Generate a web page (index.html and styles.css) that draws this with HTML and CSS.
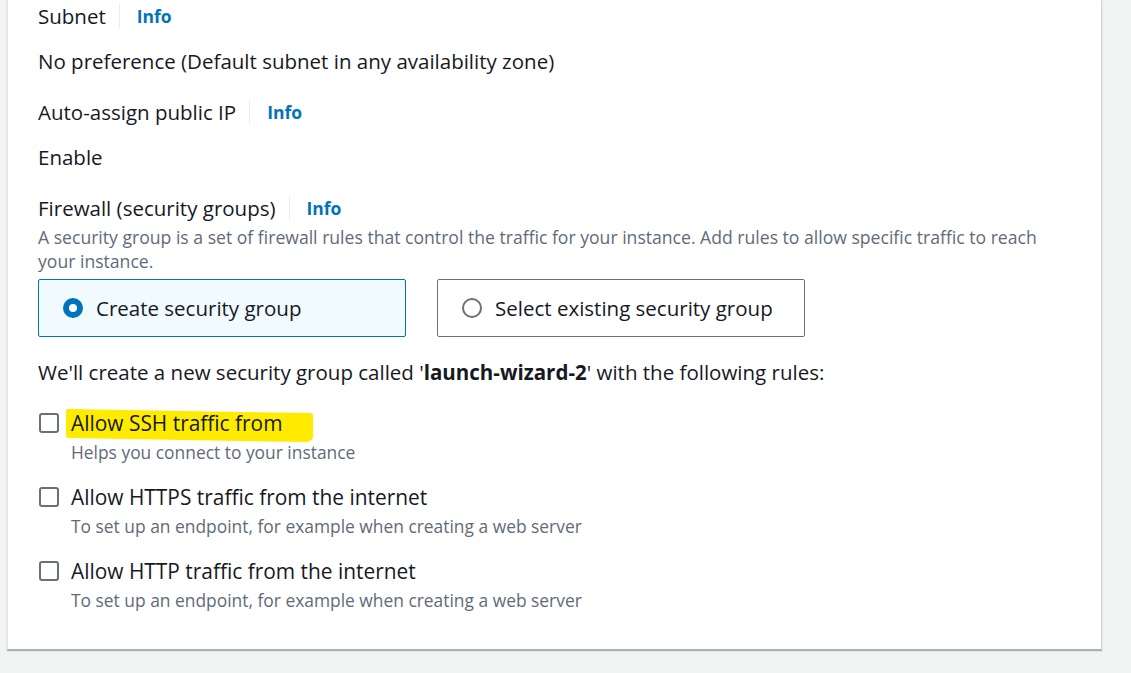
FILE: index.html
```html
<!DOCTYPE html>
<html>
<head>
<meta charset="utf-8">
<link rel="stylesheet" href="styles.css">
</head>
<body>
<div class="page">
  <div class="panel">
    <div class="field">
      <div class="label-row"><span class="label">Subnet</span><span class="divider"></span><a class="info">Info</a></div>
      <div class="value">No preference (Default subnet in any availability zone)</div>
    </div>
    <div class="field">
      <div class="label-row"><span class="label">Auto-assign public IP</span><span class="divider"></span><a class="info">Info</a></div>
      <div class="value">Enable</div>
    </div>
    <div class="field fw">
      <div class="label-row"><span class="label">Firewall (security groups)</span><span class="divider"></span><a class="info">Info</a></div>
      <div class="desc">A security group is a set of firewall rules that control the traffic for your instance. Add rules to allow specific traffic to reach your instance.</div>
      <div class="tiles">
        <div class="tile selected"><span class="radio on"></span><span>Create security group</span></div>
        <div class="tile"><span class="radio"></span><span>Select existing security group</span></div>
      </div>
    </div>
    <div class="note">We'll create a new security group called '<b>launch-wizard-2</b>' with the following rules:</div>
    <div class="checks">
      <div class="check">
        <span class="box"></span>
        <div class="check-text">
          <div class="check-label"><span class="hl"></span><span class="lt">Allow SSH traffic from</span></div>
          <div class="check-desc">Helps you connect to your instance</div>
        </div>
      </div>
      <div class="check">
        <span class="box"></span>
        <div class="check-text">
          <div class="check-label">Allow HTTPS traffic from the internet</div>
          <div class="check-desc">To set up an endpoint, for example when creating a web server</div>
        </div>
      </div>
      <div class="check">
        <span class="box"></span>
        <div class="check-text">
          <div class="check-label">Allow HTTP traffic from the internet</div>
          <div class="check-desc">To set up an endpoint, for example when creating a web server</div>
        </div>
      </div>
    </div>
  </div>
</div>
</body>
</html>
```

FILE: styles.css
```css
html, body {
  margin: 0;
  padding: 0;
  background: #f2f3f3;
  font-family: "Open Sans", "Noto Sans", sans-serif;
  color: #16191f;
}
.page {
  width: 1131px;
  height: 673px;
  overflow: hidden;
}
.panel {
  margin-left: 7px;
  width: 1095px;
  background: #fff;
  border-left: 1px solid #e4e7e8;
  border-right: 1px solid #d5dbdb;
  border-bottom: 1px solid #aab7b8;
  box-shadow: 0 1px 1px rgba(0, 28, 36, 0.3);
  padding: 4px 0 38px 30px;
  box-sizing: border-box;
}
.field {
  display: flex;
  flex-direction: column;
  gap: 21px;
  margin-bottom: 27px;
}
.field.fw {
  gap: 0;
  margin-bottom: 23px;
}
.label-row {
  display: flex;
  align-items: center;
  height: 24px;
  font-size: 20.5px;
}
.divider {
  width: 1px;
  height: 24px;
  background: #e9ebed;
  margin: 0 17px 0 13px;
}
.info {
  color: #0073bb;
  font-weight: 700;
  font-size: 17.5px;
}
.value {
  font-size: 20.5px;
  line-height: 24px;
}
.desc {
  font-size: 17.6px;
  line-height: 24px;
  color: #5f6b7a;
  width: 1005px;
  margin-top: 5px;
}
.tiles {
  display: flex;
  gap: 31px;
  margin-top: 6px;
}
.tile {
  width: 368px;
  height: 58px;
  box-sizing: border-box;
  border: 1px solid #687078;
  border-radius: 2px;
  display: flex;
  align-items: center;
  gap: 13px;
  padding-left: 24px;
  font-size: 20.5px;
}
.tile.selected {
  border-color: #0073bb;
  background: #f1faff;
}
.radio {
  width: 20px;
  height: 20px;
  box-sizing: border-box;
  border-radius: 50%;
  border: 2px solid #687078;
  background: #fff;
  flex: none;
}
.radio.on {
  border: 6px solid #0073bb;
}
.note {
  font-size: 20.5px;
  line-height: 24px;
}
.note b {
  font-weight: 700;
}
.checks {
  margin-top: 27px;
  display: flex;
  flex-direction: column;
  gap: 22px;
}
.check {
  display: flex;
  gap: 12px;
  align-items: flex-start;
}
.box {
  width: 20px;
  height: 20px;
  box-sizing: border-box;
  border: 2px solid #687078;
  border-radius: 3px;
  margin-top: 2px;
  margin-left: 1px;
  flex: none;
}
.check-text {
  display: flex;
  flex-direction: column;
  gap: 6px;
}
.check-label {
  font-size: 20.9px;
  line-height: 24px;
  position: relative;
}
.check-label .lt {
  position: relative;
}
.hl {
  position: absolute;
  left: -5px;
  top: 0;
  width: 247px;
  height: 29px;
  background: #ffeb00;
  border-radius: 2px 3px 6px 2px;
  transform: skewY(1deg);
}
.check-desc {
  font-size: 17.4px;
  line-height: 22px;
  color: #5f6b7a;
}
```
